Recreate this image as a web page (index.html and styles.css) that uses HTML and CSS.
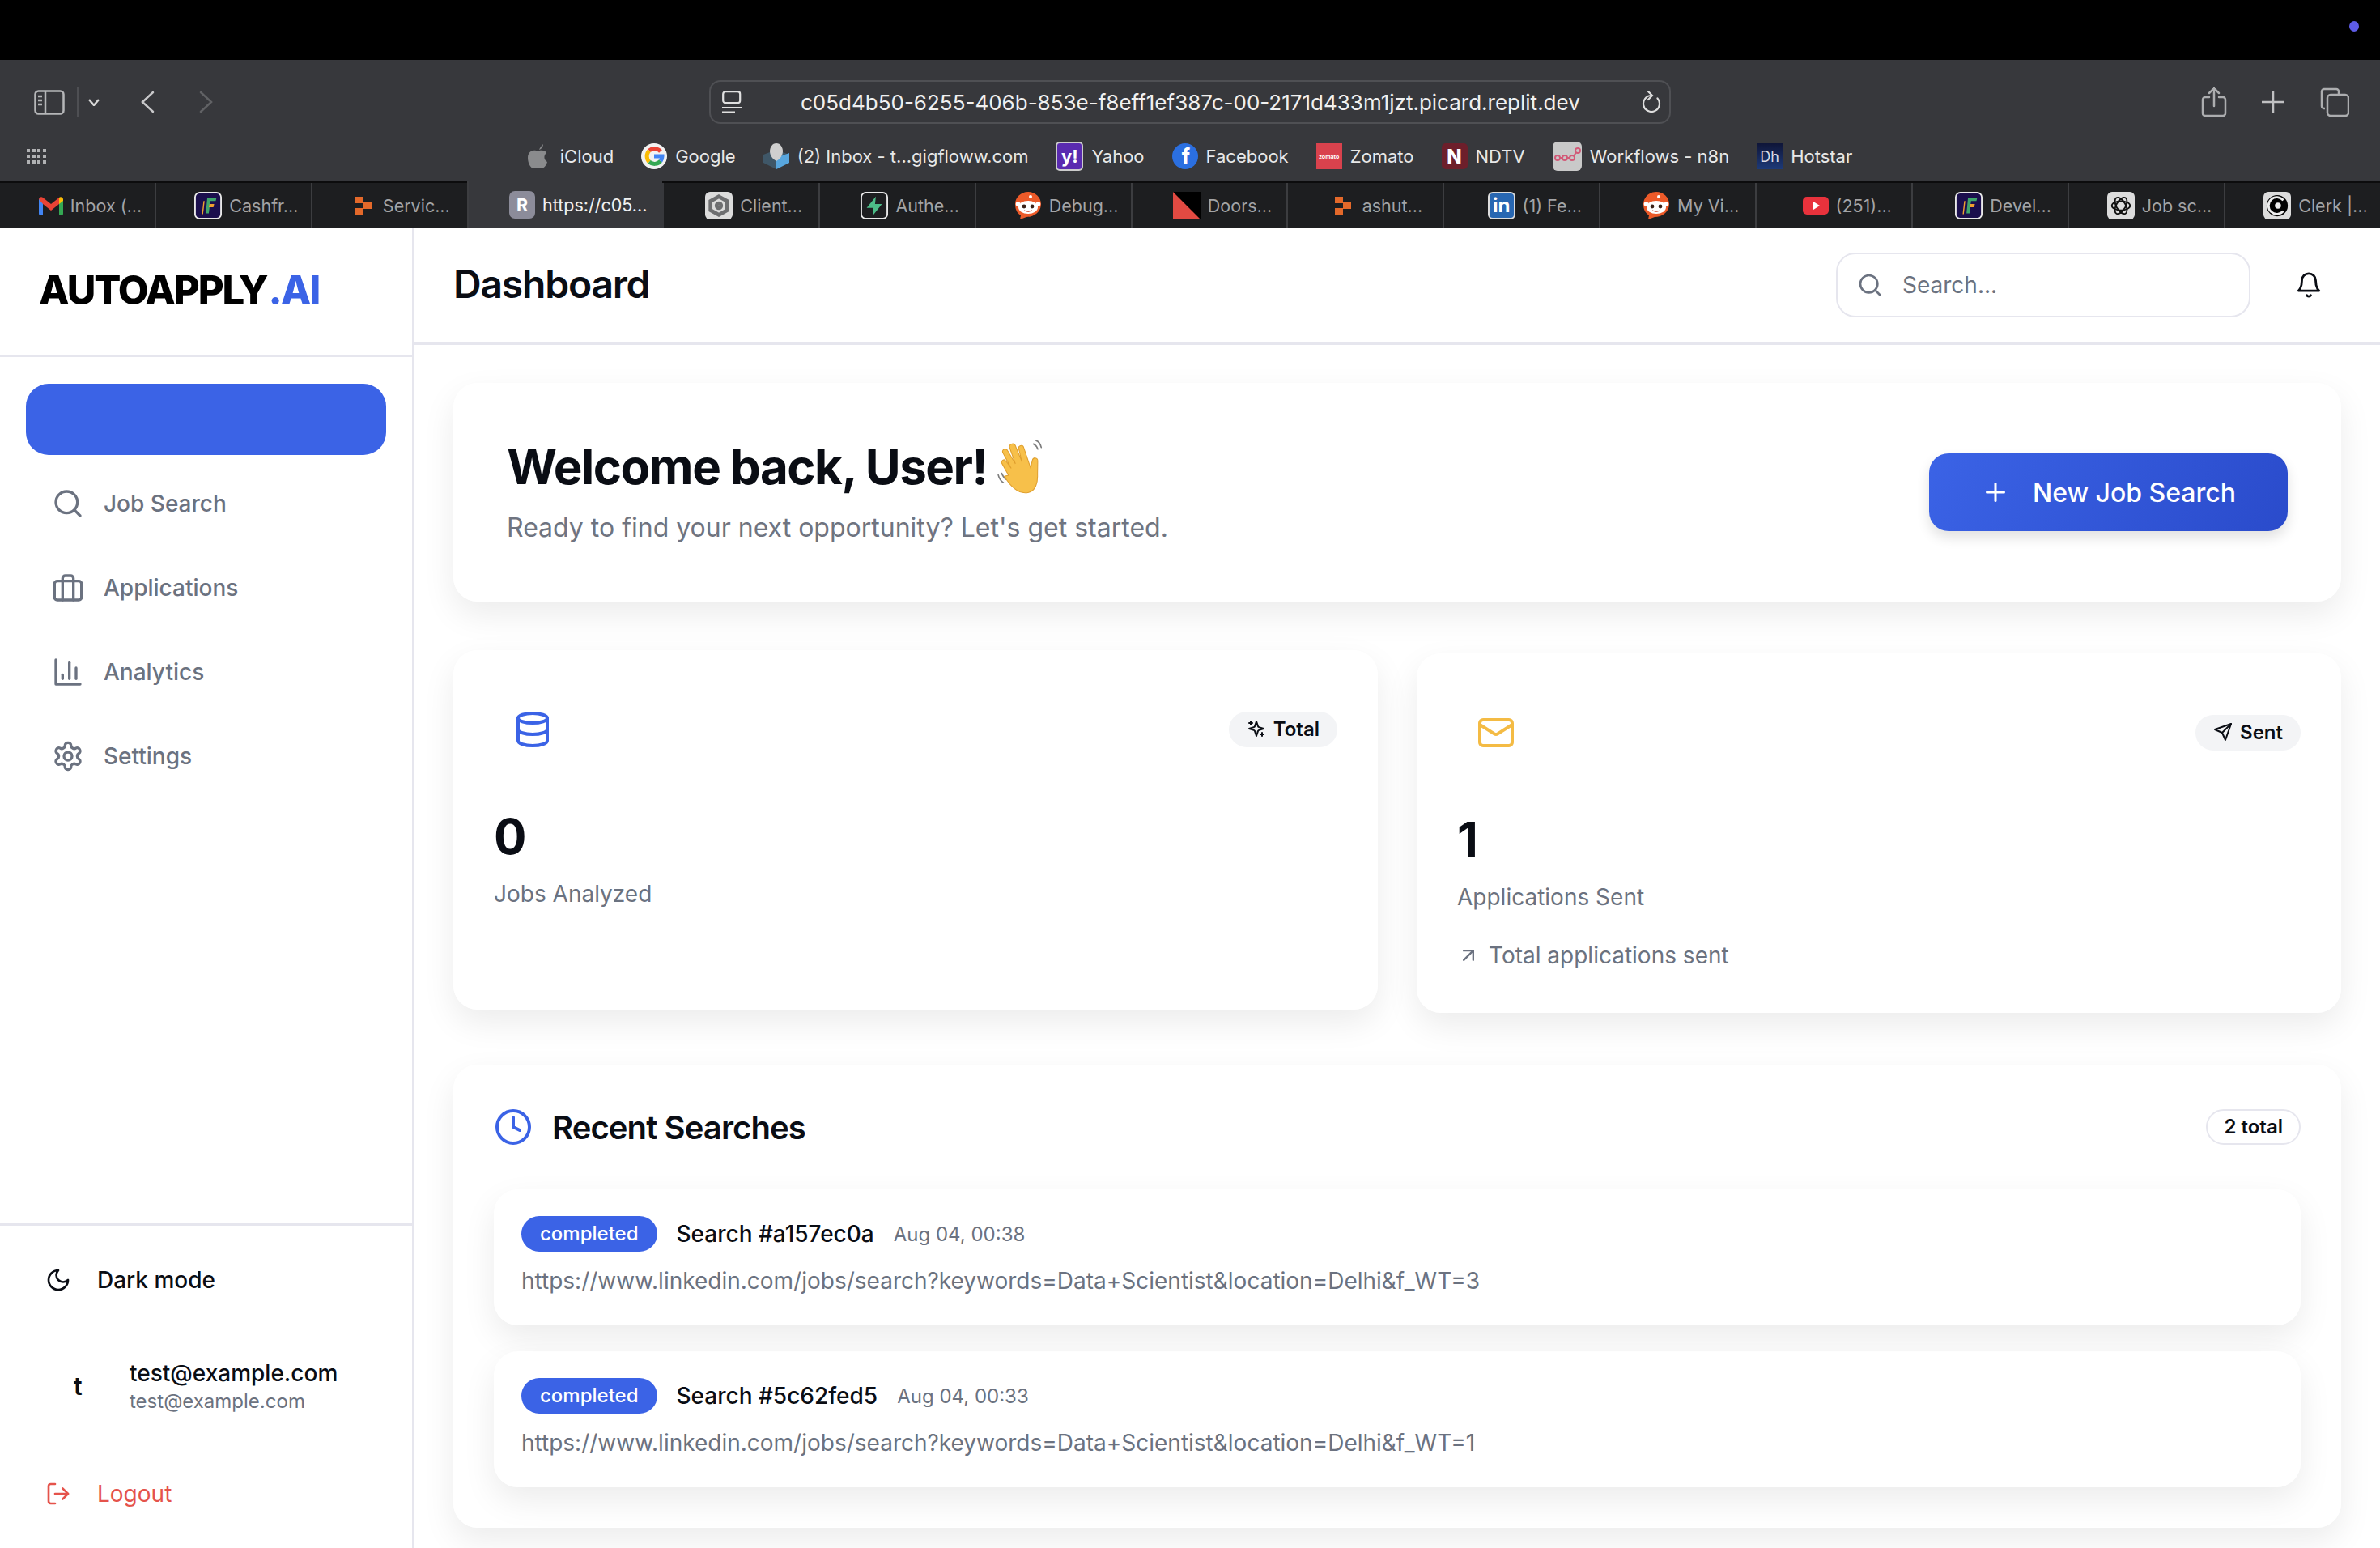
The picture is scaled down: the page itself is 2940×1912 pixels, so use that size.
FILE: index.html
```html
<!DOCTYPE html>
<html lang="en">
<head>
    <meta charset="UTF-8">
    <title>AutoApply.AI Dashboard</title>
    <link rel="stylesheet" href="styles.css">
</head>
<body>

    <svg class="defs" width="0" height="0">
        <symbol id="fav-cash" viewBox="0 0 36 36">
            <rect x="1" y="1" width="34" height="34" rx="6" fill="#1b0f4d" stroke="#e8e8e8" stroke-width="2"/>
            <path d="M15 28l2-20h12l-1 4h-7l-2 16z" fill="#3fa66b"/>
            <path d="M20 16h6l-1 4h-6z" fill="#f0a030"/>
            <path d="M10 29l2-17h1.500l-2 17z" fill="#f0a030"/>
        </symbol>
        <symbol id="fav-squares" viewBox="0 0 20 22">
            <path d="M0 0h10v8H0zM0 14h10v8H0zM10 7h10v8H10z" fill="#e4692a"/>
        </symbol>
        <symbol id="fav-reddit" viewBox="0 0 34 34">
            <path d="M17 0c9 0 16 7 16 15 0 9-8 16-18 16l-8 3 1-5C3 26 1 21 1 15 1 7 8 0 17 0z" fill="#ec5a29"/>
            <ellipse cx="17" cy="19" rx="12" ry="8" fill="#fff"/>
            <circle cx="12" cy="18" r="2.400" fill="#3a2218"/>
            <circle cx="22" cy="18" r="2.400" fill="#3a2218"/>
            <circle cx="20" cy="6" r="2" fill="#fff"/>
            <circle cx="4.500" cy="15" r="2.800" fill="#fff"/>
            <circle cx="29.500" cy="15" r="2.800" fill="#fff"/>
            <path d="M12 22c3 2 7 2 10 0-1 3.500-9 3.500-10 0z" fill="#c8391c"/>
        </symbol>
    </svg>

    <div class="top-bar">
        <span class="rec-dot"></span>
    </div>

    <div class="toolbar">
        <div class="address-row">
            <div class="nav-left">
                <svg class="tb-sidebar" viewBox="0 0 38 31" fill="none" stroke="#b5b6b8" stroke-width="2.500">
                    <rect x="1.500" y="1.500" width="35" height="28" rx="4"/>
                    <path d="M14 1.500v28M5 8h5M5 13h5M5 18h5"/>
                </svg>
                <span class="tb-sep"></span>
                <svg class="tb-chevron" viewBox="0 0 14 9" fill="none" stroke="#d8d8d8" stroke-width="2.500"><path d="M1 1l6 7 6-7"/></svg>
                <svg class="tb-back" viewBox="0 0 18 28" fill="none" stroke="#c8c8ca" stroke-width="2.500" stroke-linecap="round"><path d="M16 2L3 14l13 12"/></svg>
                <svg class="tb-forward" viewBox="0 0 18 28" fill="none" stroke="#616265" stroke-width="2.500" stroke-linecap="round"><path d="M2 2l13 12L2 26"/></svg>
            </div>
            <div class="address">
                <svg class="addr-site" viewBox="0 0 24 28" fill="none" stroke="#e0e0e0" stroke-width="2.200">
                    <rect x="1.200" y="1.200" width="21" height="14" rx="3"/>
                    <path d="M0 21h24M0 26.500h16"/>
                </svg>
                <span class="addr-url">c05d4b50-6255-406b-853e-f8eff1ef387c-00-2171d433m1jzt.picard.replit.dev</span>
                <svg class="addr-reload" viewBox="0 0 24 28" fill="none" stroke="#dedede" stroke-width="2.200" stroke-linecap="round">
                    <path d="M19.500 9.400A10 10 0 1 1 12 6"/>
                    <path d="M8 1l5 5-5 5"/>
                </svg>
            </div>
            <div class="nav-right">
                <svg class="tb-share" viewBox="0 0 32 38" fill="none" stroke="#acadaf" stroke-width="2.500" stroke-linecap="round">
                    <path d="M10 13H5a3 3 0 0 0-3 3v17a3 3 0 0 0 3 3h22a3 3 0 0 0 3-3V16a3 3 0 0 0-3-3h-5"/>
                    <path d="M16 24V2M10 8l6-6 6 6"/>
                </svg>
                <svg class="tb-plus" viewBox="0 0 28 28" fill="none" stroke="#c0c0c2" stroke-width="2.500"><path d="M14 0v28M0 14h28"/></svg>
                <svg class="tb-tabs" viewBox="0 0 36 36" fill="none" stroke="#acadaf" stroke-width="2.500">
                    <path d="M6 26H5a3 3 0 0 1-3-3V5a3 3 0 0 1 3-3h15a3 3 0 0 1 3 3v3"/>
                    <rect x="9" y="9" width="26" height="26" rx="4"/>
                </svg>
            </div>
        </div>

        <div class="bookmark-row">
            <svg class="tb-grid" viewBox="0 0 24 18" fill="#b0b1b3">
                <path d="M0 0h4v4H0zM7 0h4v4H7zM13 0h4v4h-4zM20 0h4v4h-4zM0 7h4v4H0zM7 7h4v4H7zM13 7h4v4h-4zM20 7h4v4h-4zM0 14h4v4H0zM7 14h4v4H7zM13 14h4v4h-4zM20 14h4v4h-4z"/>
            </svg>
            <div class="bookmarks">
                <a class="bookmark">
                    <svg class="bm-apple" viewBox="0 0 24 30" fill="#8a8b8d"><path d="M14 7c1-3 3-5 5-7 0 3-2 6-5 7zM12 9c3-2 10-2 11 2-4 3-3 9 1 11-1 4-4 8-7 8-2 0-3-1-5-1s-3 1-5 1c-3 0-7-6-7-13C0 8 8 6 12 9z"/></svg>
                    iCloud
                </a>
                <a class="bookmark">
                    <span class="bm-icon bm-google">
                        <svg viewBox="0 0 32 32" fill="none" stroke-width="5">
                            <path d="M24 10a10 10 0 0 0-14-1" stroke="#ea4335"/>
                            <path d="M10 9a10 10 0 0 0 0 14" stroke="#fbbc05"/>
                            <path d="M10 23a10 10 0 0 0 14-1" stroke="#34a853"/>
                            <path d="M24 22a10 10 0 0 0 2-6H16" stroke="#4285f4"/>
                        </svg>
                    </span>
                    Google
                </a>
                <a class="bookmark">
                    <svg class="bm-icon" viewBox="0 0 32 32">
                        <path d="M0 14l16-6 16 6v10L16 32 0 24z" fill="#3f5768"/>
                        <path d="M16 32V18l16-6v12z" fill="#58a6de"/>
                        <path d="M16 0c5 0 8 5 8 10s-4 10-8 12c-4-2-8-7-8-12S11 0 16 0z" fill="#cfcfcf"/>
                    </svg>
                    (2) Inbox - t...gigfloww.com
                </a>
                <a class="bookmark">
                    <span class="bm-icon bm-yahoo">y!</span>
                    Yahoo
                </a>
                <a class="bookmark">
                    <span class="bm-icon bm-facebook">f</span>
                    Facebook
                </a>
                <a class="bookmark">
                    <span class="bm-icon bm-zomato">zomato</span>
                    Zomato
                </a>
                <a class="bookmark">
                    <span class="bm-icon bm-ndtv">N</span>
                    NDTV
                </a>
                <a class="bookmark">
                    <span class="bm-icon bm-n8n">
                        <svg viewBox="0 0 36 32" fill="none" stroke="#d25a78" stroke-width="2">
                            <circle cx="6" cy="18" r="3"/><circle cx="15" cy="18" r="3"/><circle cx="24" cy="18" r="3"/><circle cx="31" cy="9" r="3"/>
                            <path d="M9 18h3M18 18h3M26 16l3-5"/>
                        </svg>
                    </span>
                    Workflows - n8n
                </a>
                <a class="bookmark">
                    <span class="bm-icon bm-hotstar">Dh</span>
                    Hotstar
                </a>
            </div>
        </div>
    </div>

    <div class="tabs">
        <div class="tab">
            <svg class="tab-icon tab-icon-gmail" viewBox="0 0 30 24">
                <path d="M0 4l5-2v22H2a2 2 0 0 1-2-2z" fill="#4285f4"/>
                <path d="M30 4l-5-2v22h3a2 2 0 0 0 2-2z" fill="#34a853"/>
                <path d="M0 4a3 3 0 0 1 5-2l10 8 10-8v8l-10 8L5 10z" fill="#ea4335"/>
                <path d="M25 2a3 3 0 0 1 5 2v2l-5 4z" fill="#fbbc05"/>
            </svg>
            Inbox (...
        </div>
        <div class="tab"><svg class="tab-icon"><use href="#fav-cash"/></svg>Cashfr...</div>
        <div class="tab"><svg class="tab-icon tab-icon-small"><use href="#fav-squares"/></svg>Servic...</div>
        <div class="tab tab-active"><span class="tab-icon tab-replit">R</span>https://c05...</div>
        <div class="tab">
            <span class="tab-icon tab-box">
                <svg viewBox="0 0 32 32" fill="none" stroke="#6d6e70" stroke-width="5"><path d="M16 4l11 6v12l-11 6-11-6V10z"/><circle cx="16" cy="16" r="3"/></svg>
            </span>
            Client...
        </div>
        <div class="tab">
            <svg class="tab-icon" viewBox="0 0 36 36">
                <rect x="1" y="1" width="34" height="34" rx="6" fill="#1d1e20" stroke="#e8e8e8" stroke-width="2"/>
                <path d="M20 6L8 21h9l-1 10 12-15H19z" fill="#4cbc87"/>
            </svg>
            Authe...
        </div>
        <div class="tab"><svg class="tab-icon"><use href="#fav-reddit"/></svg>Debug...</div>
        <div class="tab">
            <svg class="tab-icon" viewBox="0 0 32 32">
                <rect width="32" height="32" fill="#000"/>
                <path d="M0 0l32 32H0z" fill="#e24a42"/>
            </svg>
            Doors...
        </div>
        <div class="tab"><svg class="tab-icon tab-icon-small"><use href="#fav-squares"/></svg>ashut...</div>
        <div class="tab"><span class="tab-icon tab-linkedin">in</span>(1) Fe...</div>
        <div class="tab"><svg class="tab-icon"><use href="#fav-reddit"/></svg>My Vi...</div>
        <div class="tab">
            <svg class="tab-icon tab-icon-yt" viewBox="0 0 32 22">
                <rect width="32" height="22" rx="5" fill="#e8323c"/>
                <path d="M13 6l8 5-8 5z" fill="#fff"/>
            </svg>
            (251)...
        </div>
        <div class="tab"><svg class="tab-icon"><use href="#fav-cash"/></svg>Devel...</div>
        <div class="tab">
            <span class="tab-icon tab-box">
                <svg viewBox="0 0 32 32" fill="none" stroke="#111" stroke-width="2">
                    <ellipse cx="16" cy="16" rx="12" ry="6"/>
                    <ellipse cx="16" cy="16" rx="12" ry="6" transform="rotate(60 16 16)"/>
                    <ellipse cx="16" cy="16" rx="12" ry="6" transform="rotate(120 16 16)"/>
                </svg>
            </span>
            Job sc...
        </div>
        <div class="tab">
            <span class="tab-icon tab-box">
                <svg viewBox="0 0 32 32">
                    <circle cx="16" cy="16" r="14" fill="#000"/>
                    <path d="M24 9a11 11 0 1 0 0 14" fill="none" stroke="#eee" stroke-width="3"/>
                    <circle cx="17" cy="16" r="4" fill="#eee"/>
                </svg>
            </span>
            Clerk |...
        </div>
    </div>

    <div class="app">
        <aside class="sidebar">
            <div class="logo">AUTOAPPLY<span class="logo-ai">.AI</span></div>

            <nav class="nav">
                <a class="nav-item nav-item-active"></a>
                <a class="nav-item">
                    <svg class="icon" viewBox="0 0 24 24"><circle cx="11" cy="11" r="8"/><path d="m21 21-4.300-4.300"/></svg>
                    Job Search
                </a>
                <a class="nav-item">
                    <svg class="icon" viewBox="0 0 24 24"><rect width="20" height="14" x="2" y="7" rx="2" ry="2"/><path d="M16 21V5a2 2 0 0 0-2-2h-4a2 2 0 0 0-2 2v16"/></svg>
                    Applications
                </a>
                <a class="nav-item">
                    <svg class="icon" viewBox="0 0 24 24"><path d="M3 3v18h18"/><path d="M18 17V9"/><path d="M13 17V5"/><path d="M8 17v-3"/></svg>
                    Analytics
                </a>
                <a class="nav-item">
                    <svg class="icon" viewBox="0 0 24 24"><path d="M12.220 2h-.44a2 2 0 0 0-2 2v.18a2 2 0 0 1-1 1.730l-.43.25a2 2 0 0 1-2 0l-.15-.08a2 2 0 0 0-2.730.73l-.22.38a2 2 0 0 0 .73 2.730l.15.1a2 2 0 0 1 1 1.720v.51a2 2 0 0 1-1 1.740l-.15.09a2 2 0 0 0-.73 2.730l.22.38a2 2 0 0 0 2.730.73l.15-.08a2 2 0 0 1 2 0l.43.25a2 2 0 0 1 1 1.730V20a2 2 0 0 0 2 2h.44a2 2 0 0 0 2-2v-.18a2 2 0 0 1 1-1.730l.43-.25a2 2 0 0 1 2 0l.15.08a2 2 0 0 0 2.730-.73l.22-.39a2 2 0 0 0-.73-2.730l-.15-.08a2 2 0 0 1-1-1.740v-.5a2 2 0 0 1 1-1.740l.15-.09a2 2 0 0 0 .73-2.730l-.22-.38a2 2 0 0 0-2.730-.73l-.15.08a2 2 0 0 1-2 0l-.43-.25a2 2 0 0 1-1-1.730V4a2 2 0 0 0-2-2z"/><circle cx="12" cy="12" r="3"/></svg>
                    Settings
                </a>
            </nav>

            <div class="side-bottom">
                <a class="side-link">
                    <svg class="icon icon-32" viewBox="0 0 24 24"><path d="M12 3a6 6 0 0 0 9 9 9 9 0 1 1-9-9Z"/></svg>
                    Dark mode
                </a>
                <div class="user">
                    <span class="avatar">t</span>
                    <div>
                        <div class="user-name">test@example.com</div>
                        <div class="user-mail">test@example.com</div>
                    </div>
                </div>
                <a class="side-link side-link-red">
                    <svg class="icon icon-32" viewBox="0 0 24 24"><path d="M9 21H5a2 2 0 0 1-2-2V5a2 2 0 0 1 2-2h4"/><polyline points="16 17 21 12 16 7"/><line x1="21" x2="9" y1="12" y2="12"/></svg>
                    Logout
                </a>
            </div>
        </aside>

        <main class="main">
            <header class="header">
                <h1 class="page-title">Dashboard</h1>
                <div class="search">
                    <svg class="icon icon-32 search-icon" viewBox="0 0 24 24"><circle cx="11" cy="11" r="8"/><path d="m21 21-4.300-4.300"/></svg>
                    <span class="search-text">Search...</span>
                </div>
                <svg class="icon bell" viewBox="0 0 24 24"><path d="M6 8a6 6 0 0 1 12 0c0 7 3 9 3 9H3s3-2 3-9"/><path d="M10.300 21a1.940 1.940 0 0 0 3.400 0"/></svg>
            </header>

            <div class="content">
                <section class="card welcome">
                    <div>
                        <h2 class="welcome-title">Welcome back, User!
                            <svg class="wave" viewBox="0 0 64 64">
                                <g fill="none" stroke="#7d7d7d" stroke-width="1.600" stroke-linecap="round">
                                    <path d="M46 2c3 1 5 4 6 8M43 6c2 1 4 3 5 6"/>
                                    <path d="M2 42c1 4 3 7 6 9M6 40c1 3 2 5 5 7"/>
                                </g>
                                <g transform="rotate(-14 36 40)">
                                    <path d="M14 37L10 22c-1-4 4-5 5-2l4 10-5-20c-1-4 5-5 6-1l5 17-2-20c0-4 6-5 7-1l3 21V10c0-4 6-4 6 0l2 25 4-8c2-4 7-2 6 2l-4 15c-2 10-7 18-15 18-12 0-19-12-23-25z" fill="#f7c04a" stroke="#e09f2c" stroke-width="1"/>
                                </g>
                            </svg>
                        </h2>
                        <p class="welcome-text">Ready to find your next opportunity? Let's get started.</p>
                    </div>
                    <button class="new-search">
                        <svg class="icon icon-36" viewBox="0 0 24 24"><path d="M5 12h14"/><path d="M12 5v14"/></svg>
                        New Job Search
                    </button>
                </section>

                <div class="stats">
                    <section class="card stat stat-raised">
                        <div class="stat-top">
                            <span class="stat-icon">
                                <svg class="icon icon-48 icon-blue" viewBox="0 0 24 24"><ellipse cx="12" cy="5" rx="9" ry="3"/><path d="M3 5V19A9 3 0 0 0 21 19V5"/><path d="M3 12A9 3 0 0 0 21 12"/></svg>
                            </span>
                            <span class="pill">
                                <svg class="icon icon-24" viewBox="0 0 24 24"><path d="m12 3-1.912 5.813a2 2 0 0 1-1.275 1.275L3 12l5.813 1.912a2 2 0 0 1 1.275 1.275L12 21l1.912-5.813a2 2 0 0 1 1.275-1.275L21 12l-5.813-1.912a2 2 0 0 1-1.275-1.275L12 3Z"/><path d="M5 3v4"/><path d="M19 17v4"/><path d="M3 5h4"/><path d="M17 19h4"/></svg>
                                Total
                            </span>
                        </div>
                        <div class="stat-value">0</div>
                        <div class="stat-label">Jobs Analyzed</div>
                    </section>

                    <section class="card stat">
                        <div class="stat-top">
                            <span class="stat-icon">
                                <svg class="icon icon-48 icon-amber" viewBox="0 0 24 24"><rect width="20" height="16" x="2" y="4" rx="2"/><path d="m22 7-8.970 5.700a1.940 1.940 0 0 1-2.060 0L2 7"/></svg>
                            </span>
                            <span class="pill">
                                <svg class="icon icon-24" viewBox="0 0 24 24"><path d="m22 2-7 20-4-9-9-4Z"/><path d="M22 2 11 13"/></svg>
                                Sent
                            </span>
                        </div>
                        <div class="stat-value">1</div>
                        <div class="stat-label">Applications Sent</div>
                        <div class="stat-note">
                            <svg class="icon icon-28" viewBox="0 0 24 24"><path d="M7 7h10v10"/><path d="M7 17 17 7"/></svg>
                            Total applications sent
                        </div>
                    </section>
                </div>

                <section class="card recent">
                    <div class="recent-head">
                        <svg class="icon icon-48 icon-blue" viewBox="0 0 24 24"><circle cx="12" cy="12" r="10"/><polyline points="12 6 12 12 16 14"/></svg>
                        <h2 class="recent-title">Recent Searches</h2>
                        <span class="count">2 total</span>
                    </div>

                    <div class="search-item">
                        <div class="item-top">
                            <span class="badge">completed</span>
                            <span class="item-name">Search #a157ec0a</span>
                            <span class="item-date">Aug 04, 00:38</span>
                        </div>
                        <div class="item-url">https://www.linkedin.com/jobs/search?keywords=Data+Scientist&amp;location=Delhi&amp;f_WT=3</div>
                    </div>

                    <div class="search-item">
                        <div class="item-top">
                            <span class="badge">completed</span>
                            <span class="item-name">Search #5c62fed5</span>
                            <span class="item-date">Aug 04, 00:33</span>
                        </div>
                        <div class="item-url">https://www.linkedin.com/jobs/search?keywords=Data+Scientist&amp;location=Delhi&amp;f_WT=1</div>
                    </div>
                </section>
            </div>
        </main>
    </div>

</body>
</html>
```

FILE: styles.css
```css
* {
    box-sizing: border-box;
}
body {
    margin: 0;
    height: 1912px;
    overflow: hidden;
    background: #fff;
    color: #0a0d14;
    font-family: Inter, "Liberation Sans", sans-serif;
    display: flex;
    flex-direction: column;
}
h1, h2, p {
    margin: 0;
}
.defs {
    display: block;
    height: 0;
}

/* browser window */
.top-bar {
    height: 74px;
    flex-shrink: 0;
    background: #000;
    display: flex;
    justify-content: flex-end;
    align-items: flex-start;
    padding: 26px 26px 0 0;
}
.rec-dot {
    width: 12px;
    height: 13px;
    border-radius: 50%;
    background: #5e5ce6;
}
.toolbar {
    height: 150px;
    flex-shrink: 0;
    background: #37383c;
    padding-top: 25px;
}
.address-row {
    display: grid;
    grid-template-columns: 876px 1188px 1fr;
    height: 54px;
    align-items: center;
}
.nav-left {
    display: flex;
    align-items: center;
    padding-left: 42px;
}
.tb-sidebar { width: 38px; height: 31px; }
.tb-sep {
    width: 2px;
    height: 36px;
    background: #4e4f53;
    margin-left: 15px;
}
.tb-chevron { width: 14px; height: 9px; margin-left: 12px; }
.tb-back { width: 18px; height: 28px; margin-left: 50px; }
.tb-forward { width: 18px; height: 28px; margin-left: 55px; }
.address {
    height: 54px;
    border: 2px solid #4f5054;
    border-radius: 14px;
    display: flex;
    align-items: center;
    padding: 0 10px 0 14px;
}
.addr-site { width: 24px; height: 28px; }
.addr-url {
    flex: 1;
    margin-left: 73px;
    font-size: 26px;
    color: #f0f0f0;
    white-space: nowrap;
}
.addr-reload { width: 24px; height: 28px; }
.nav-right {
    display: flex;
    align-items: center;
    padding-left: 655px;
}
.tb-share { width: 32px; height: 38px; }
.tb-plus { width: 28px; height: 28px; margin-left: 43px; }
.tb-tabs { width: 36px; height: 36px; margin-left: 44px; }
.bookmark-row {
    display: grid;
    grid-template-columns: 1fr auto 1fr;
    align-items: center;
    height: 48px;
    margin-top: 16px;
    padding: 0 33px;
}
.tb-grid { width: 24px; height: 18px; }
.bookmarks {
    display: flex;
    align-items: center;
    gap: 34px;
}
.bookmark {
    display: flex;
    align-items: center;
    gap: 10px;
    font-size: 22px;
    color: #e8e8e8;
    white-space: nowrap;
}
.bm-apple { width: 24px; height: 30px; margin-right: 6px; }
.bm-icon {
    width: 32px;
    height: 32px;
    flex-shrink: 0;
    display: flex;
    align-items: center;
    justify-content: center;
    text-align: center;
}
.bm-google {
    border-radius: 50%;
    background: #f2f2f2;
}
.bm-yahoo {
    width: 34px;
    height: 36px;
    background: #5a2bb0;
    border: 2px solid #ccc;
    border-radius: 5px;
    color: #fff;
    font-weight: 700;
    font-size: 22px;
}
.bm-facebook {
    border-radius: 50%;
    background: #2b6fe0;
    color: #fff;
    font-weight: 700;
    font-size: 26px;
    padding-left: 3px;
}
.bm-zomato {
    background: #d9424d;
    color: #fff;
    font-size: 7px;
    font-weight: 700;
}
.bm-ndtv {
    background: #6d1f2b;
    border-radius: 5px;
    color: #fff;
    font-weight: 800;
    font-size: 24px;
}
.bm-n8n {
    width: 36px;
    height: 36px;
    background: #c9c9c9;
    border-radius: 6px;
}
.bm-hotstar {
    background: linear-gradient(#0f1538, #1d3a78);
    color: #d9dce6;
    font-size: 18px;
}

/* tab strip */
.tabs {
    height: 57px;
    flex-shrink: 0;
    display: flex;
    background: #1d1e20;
    border-top: 2px solid #0c0c0d;
}
.tab {
    flex: 1;
    min-width: 0;
    display: flex;
    align-items: center;
    justify-content: center;
    gap: 9px;
    padding-left: 32px;
    font-size: 21.500px;
    color: #a3a4a6;
    white-space: nowrap;
}
.tab + .tab {
    border-left: 2px solid #3c3d40;
}
.tab-active {
    flex: 0 0 241px;
    margin-top: -2px;
    background: #37383c;
    color: #f2f2f2;
}
.tab-active + .tab {
    border-left-color: #37383c;
}
.tab-icon {
    width: 34px;
    height: 34px;
    flex-shrink: 0;
    display: flex;
    align-items: center;
    justify-content: center;
}
.tab-icon-gmail {
    width: 30px;
    height: 24px;
}
.tab-icon-yt {
    width: 32px;
    height: 22px;
}
.tab-icon-small {
    width: 20px;
    height: 22px;
    margin-right: 5px;
}
.tab-replit {
    width: 32px;
    background: #8c8c9a;
    border-radius: 7px;
    color: #fff;
    font-weight: 700;
}
.tab-box {
    background: #dcdcdc;
    border-radius: 6px;
}
.tab-box svg {
    width: 30px;
    height: 30px;
}
.tab-linkedin {
    background: #2867b2;
    border: 2px solid #ddd;
    border-radius: 6px;
    color: #fff;
    font-weight: 700;
    font-size: 24px;
}

/* app */
.app {
    flex: 1;
    min-height: 0;
    display: flex;
}
.icon {
    width: 40px;
    height: 40px;
    flex-shrink: 0;
    fill: none;
    stroke: currentColor;
    stroke-width: 2;
    stroke-linecap: round;
    stroke-linejoin: round;
}
.icon-24 { width: 24px; height: 24px; }
.icon-28 { width: 28px; height: 28px; }
.icon-32 { width: 32px; height: 32px; }
.icon-36 { width: 36px; height: 36px; }
.icon-48 { width: 48px; height: 48px; }
.icon-blue { color: #3b63e6; }
.icon-amber { color: #f4bb44; }

.sidebar {
    width: 512px;
    flex-shrink: 0;
    border-right: 3px solid #e6e6ee;
    display: flex;
    flex-direction: column;
}
.logo {
    height: 160px;
    flex-shrink: 0;
    padding: 0 0 3px 48px;
    display: flex;
    align-items: center;
    border-bottom: 2px solid #e6e6ee;
    font-size: 49px;
    font-weight: 800;
    letter-spacing: -2.100px;
    color: #000;
}
.logo-ai {
    color: #3b63e6;
    margin-left: 2px;
}
.nav {
    flex: 1;
    padding: 33px 32px;
    display: flex;
    flex-direction: column;
    gap: 16px;
}
.nav-item {
    height: 88px;
    padding-left: 32px;
    display: flex;
    align-items: center;
    gap: 24px;
    border-radius: 28px;
    font-size: 28px;
    font-weight: 500;
    color: #6b7280;
}
.nav-item-active {
    background: #3b63e6;
}
.side-bottom {
    height: 401px;
    flex-shrink: 0;
    border-top: 3px solid #e6e6ee;
    padding: 28px 0 0 56px;
    display: flex;
    flex-direction: column;
}
.side-link {
    height: 78px;
    display: flex;
    align-items: center;
    gap: 32px;
    font-size: 28px;
    font-weight: 500;
}
.side-link-red {
    color: #e5534b;
    font-weight: 400;
    margin-top: 56px;
}
.user {
    margin-top: 54px;
    display: flex;
    align-items: center;
    height: 76px;
}
.avatar {
    width: 104px;
    padding-left: 35px;
    font-size: 30px;
    font-weight: 600;
}
.user-name {
    font-size: 28px;
    font-weight: 500;
}
.user-mail {
    margin-top: 3px;
    font-size: 24px;
    color: #6b7280;
}

.main {
    flex: 1;
    min-width: 0;
    display: flex;
    flex-direction: column;
}
.header {
    height: 145px;
    flex-shrink: 0;
    border-bottom: 3px solid #e6e6ee;
    padding: 0 48px;
    display: flex;
    align-items: center;
}
.page-title {
    flex: 1;
    padding-bottom: 3px;
    font-size: 48px;
    font-weight: 600;
    letter-spacing: -1.200px;
}
.search {
    width: 512px;
    height: 80px;
    border: 2px solid #e6e6ee;
    border-radius: 24px;
    display: flex;
    align-items: center;
    gap: 24px;
    padding-left: 24px;
    color: #6b7280;
}
.search-text {
    font-size: 28px;
}
.bell {
    width: 34px;
    height: 34px;
    margin-left: 55px;
    margin-right: 23px;
}

.content {
    padding: 47px 48px 0;
    display: flex;
    flex-direction: column;
    gap: 64px;
}
.card {
    background: rgba(255, 255, 255, 0.8);
    border-radius: 30px;
    box-shadow: 0 16px 40px rgba(0, 0, 0, 0.08);
}
.welcome {
    height: 270px;
    padding: 0 66px 5px;
    display: flex;
    align-items: center;
    justify-content: space-between;
}
.welcome-title {
    display: flex;
    align-items: center;
    gap: 12px;
    font-size: 60px;
    font-weight: 700;
    letter-spacing: -1.500px;
}
.wave {
    width: 68px;
    height: 68px;
}
.welcome-text {
    margin-top: 20px;
    font-size: 32px;
    color: #6f7480;
}
.new-search {
    width: 443px;
    height: 96px;
    margin-bottom: -5px;
    border: 0;
    border-radius: 24px;
    padding: 0 0 0 64px;
    display: flex;
    align-items: center;
    gap: 28px;
    font-family: inherit;
    font-size: 32px;
    font-weight: 500;
    color: #fff;
    background: linear-gradient(120deg, #3b63e6, #2a4bcb);
    box-shadow: 0 8px 16px rgba(0, 0, 0, 0.12);
}

.stats {
    display: grid;
    grid-template-columns: 1fr 1fr;
    gap: 48px;
}
.stat {
    height: 444px;
    padding: 50px;
}
.stat-raised {
    transform: translateY(-4px);
}
.stat-top {
    display: flex;
    align-items: center;
    justify-content: space-between;
}
.stat-icon {
    padding: 24px;
    display: flex;
}
.pill {
    height: 44px;
    padding: 0 22px 2px;
    display: flex;
    align-items: center;
    gap: 9px;
    border-radius: 22px;
    background: #f3f4f6;
    font-size: 24px;
    font-weight: 600;
}
.stat-value {
    margin-top: 36px;
    font-size: 60px;
    font-weight: 700;
    line-height: 96px;
}
.stat-label {
    margin-top: 3px;
    font-size: 28px;
    line-height: 40px;
    color: #6b7280;
}
.stat-note {
    margin-top: 35px;
    display: flex;
    align-items: center;
    gap: 11px;
    font-size: 28px;
    color: #6b7280;
}

.recent {
    height: 572px;
    padding: 50px;
    display: flex;
    flex-direction: column;
    gap: 32px;
}
.recent-head {
    height: 54px;
    margin-bottom: 18px;
    display: flex;
    align-items: center;
    gap: 24px;
}
.recent-title {
    flex: 1;
    font-size: 40px;
    font-weight: 600;
    letter-spacing: -0.900px;
}
.count {
    height: 44px;
    padding: 0 20px 2px;
    display: flex;
    align-items: center;
    border: 2px solid #e6e6ee;
    border-radius: 22px;
    font-size: 24px;
    font-weight: 600;
}
.search-item {
    height: 168px;
    flex-shrink: 0;
    padding: 33px 34px;
    background: rgba(255, 255, 255, 0.8);
    border-radius: 30px;
    box-shadow: 0 16px 40px rgba(0, 0, 0, 0.08);
}
.item-top {
    display: flex;
    align-items: center;
    gap: 24px;
}
.badge {
    height: 44px;
    padding: 0 23px 2px;
    display: flex;
    align-items: center;
    border-radius: 22px;
    background: #3b63e6;
    color: #fff;
    font-size: 24px;
    font-weight: 500;
}
.item-name {
    font-size: 28px;
    font-weight: 500;
}
.item-date {
    font-size: 24px;
    color: #6b7280;
}
.item-url {
    margin-top: 19px;
    font-size: 28px;
    color: #6b7280;
    white-space: nowrap;
}
```
